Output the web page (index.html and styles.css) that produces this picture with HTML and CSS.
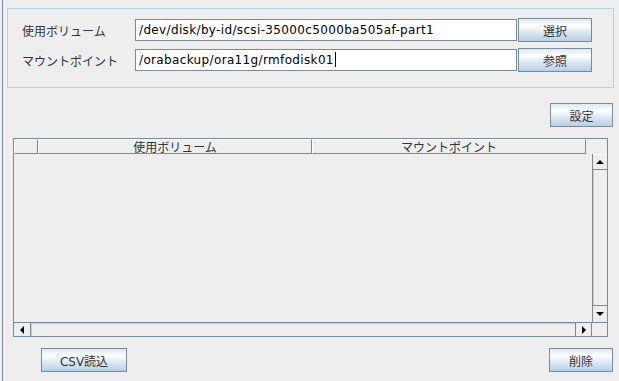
FILE: index.html
```html
<!DOCTYPE html>
<html lang="ja">
<head>
<meta charset="UTF-8">
<title>マウント設定</title>
<link rel="stylesheet" href="styles.css">
</head>
<body>
<div class="window">
  <div class="mount-panel">
    <div class="form-row">
      <span class="form-label">使用ボリューム</span>
      <div class="text-field">/dev/disk/by-id/scsi-35000c5000ba505af-part1</div>
      <button class="btn btn-pick">選択</button>
    </div>
    <div class="form-row">
      <span class="form-label">マウントポイント</span>
      <div class="text-field">/orabackup/ora11g/rmfodisk01<span class="caret"></span></div>
      <button class="btn btn-pick">参照</button>
    </div>
  </div>

  <div class="action-row">
    <button class="btn btn-set">設定</button>
  </div>

  <div class="table-pane">
    <div class="table-header">
      <div class="th th-index"></div>
      <div class="th th-col">使用ボリューム</div>
      <div class="th th-col">マウントポイント</div>
    </div>
    <div class="header-corner"></div>
    <div class="table-body"></div>
    <div class="vscroll">
      <div class="arrow-btn arrow-up"></div>
      <div class="vthumb"></div>
      <div class="arrow-btn arrow-down"></div>
    </div>
    <div class="hscroll">
      <div class="arrow-btn arrow-left"></div>
      <div class="hthumb"></div>
      <div class="arrow-btn arrow-right"></div>
    </div>
    <div class="scroll-corner"></div>
  </div>

  <div class="footer-row">
    <button class="btn btn-csv">CSV読込</button>
    <button class="btn btn-delete">削除</button>
  </div>
</div>
</body>
</html>
```

FILE: styles.css
```css
:root {
  --bg: #eeeeee;
  --line: #7a8a99;
  --soft-blue: #b8cfe5;
  --text: #333333;
}

*,
::before,
::after {
  box-sizing: border-box;
}

html,
body {
  margin: 0;
  background: var(--bg);
  font-family: "DejaVu Sans", "Noto Sans CJK JP", sans-serif;
  font-size: 12px;
  color: var(--text);
}

.window {
  width: 617px;
  height: 381px;
  margin-left: 2px;
  padding: 8px 0 0 4px;
  border-left: 1px solid var(--line);
  overflow: hidden;
}

/* top form */
.mount-panel {
  width: 607px;
  height: 80px;
  padding: 9px 0 0 14px;
  border: 1px solid var(--soft-blue);
  display: flex;
  flex-direction: column;
  gap: 6px;
}

.form-row {
  display: flex;
  align-items: center;
  height: 24px;
}

.form-label {
  width: 113px;
  flex-shrink: 0;
  font-family: "Noto Sans CJK JP", sans-serif;
  color: var(--text);
}

.text-field {
  width: 382px;
  flex-shrink: 0;
  height: 22px;
  margin-right: 1px;
  padding: 0 3px;
  border: 1px solid var(--line);
  background: #ffffff;
  color: #000000;
  line-height: 20px;
  letter-spacing: 0.35px;
  white-space: nowrap;
  overflow: hidden;
}

.caret {
  display: inline-block;
  width: 1px;
  height: 15px;
  margin-left: 1px;
  vertical-align: -3px;
  background: #000000;
}

/* buttons */
.btn {
  height: 24px;
  padding: 0;
  border: 1px solid var(--line);
  background: linear-gradient(#dde8f3 0%, #ffffff 30%, #dde8f3 60%, #b8cfe5 100%);
  font-family: "DejaVu Sans", "Noto Sans CJK JP", sans-serif;
  font-size: 12px;
  color: var(--text);
}

.btn-pick {
  width: 74px;
  flex-shrink: 0;
}

.action-row {
  display: flex;
  justify-content: flex-end;
  margin-top: 15px;
  padding-right: 1px;
  width: 607px;
}

.btn-set {
  width: 63px;
}

/* table */
.table-pane {
  width: 595px;
  height: 199px;
  margin: 11px 0 0 6px;
  border: 1px solid var(--line);
  display: grid;
  grid-template-columns: 578px 15px;
  grid-template-rows: 15px 168px 14px;
}

.table-header {
  display: flex;
}

.th {
  height: 15px;
  border-top: 1px solid #ffffff;
  border-left: 1px solid #ffffff;
  border-right: 1px solid var(--line);
  border-bottom: 1px solid var(--line);
  font-family: "Noto Sans CJK JP", sans-serif;
  font-size: 12px;
  line-height: 13px;
  text-align: center;
  color: var(--text);
  white-space: nowrap;
}

.th-index {
  width: 24px;
}

.th-col {
  width: 274px;
}

.vscroll {
  grid-column: 2;
  grid-row: 2;
  display: flex;
  flex-direction: column;
  border-left: 1px solid var(--line);
}

.arrow-btn {
  display: flex;
  align-items: center;
  justify-content: center;
}

.arrow-btn::before {
  content: "";
  display: block;
  width: 0;
  height: 0;
}

.arrow-up {
  height: 16px;
  border-top: 1px solid #ffffff;
  border-bottom: 1px solid var(--line);
}

.arrow-up::before {
  border-left: 4px solid transparent;
  border-right: 4px solid transparent;
  border-bottom: 4px solid #000000;
}

.arrow-down {
  height: 17px;
  border-top: 1px solid var(--line);
}

.arrow-down::before {
  border-left: 4px solid transparent;
  border-right: 4px solid transparent;
  border-top: 4px solid #000000;
}

.vthumb {
  flex: 1;
  border-left: 1px solid var(--soft-blue);
}

.hscroll {
  grid-column: 1;
  grid-row: 3;
  display: flex;
  border-top: 1px solid var(--line);
}

.arrow-left {
  width: 17px;
  border-right: 1px solid var(--line);
}

.arrow-left::before {
  border-top: 4px solid transparent;
  border-bottom: 4px solid transparent;
  border-right: 4px solid #000000;
}

.arrow-right {
  width: 17px;
  border-left: 1px solid var(--line);
  border-right: 1px solid var(--line);
}

.arrow-right::before {
  border-top: 4px solid transparent;
  border-bottom: 4px solid transparent;
  border-left: 4px solid #000000;
}

.hthumb {
  flex: 1;
  border-top: 1px solid var(--soft-blue);
  border-left: 1px solid var(--soft-blue);
}

.scroll-corner {
  grid-column: 2;
  grid-row: 3;
  border-top: 1px solid var(--line);
}

/* bottom buttons */
.footer-row {
  display: flex;
  justify-content: space-between;
  width: 607px;
  margin-top: 11px;
  padding: 0 1px 0 34px;
}

.btn-csv {
  width: 86px;
}

.btn-delete {
  width: 64px;
}
```
